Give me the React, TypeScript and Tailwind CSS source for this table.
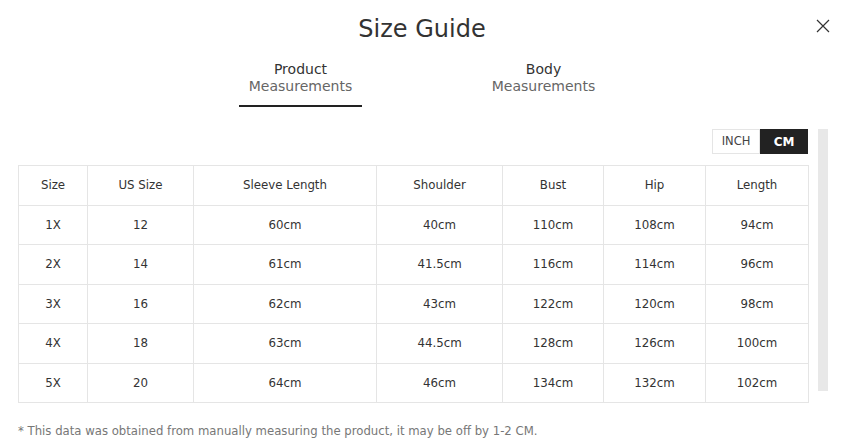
import React, { useState } from 'react';

const headers = ['Size', 'US Size', 'Sleeve Length', 'Shoulder', 'Bust', 'Hip', 'Length'];
const colWidths = ['w-[69px]', 'w-[106px]', 'w-[183px]', 'w-[126px]', 'w-[101px]', 'w-[102px]', 'w-[103px]'];

const rows = [
    ['1X', '12', '60cm', '40cm', '110cm', '108cm', '94cm'],
    ['2X', '14', '61cm', '41.5cm', '116cm', '114cm', '96cm'],
    ['3X', '16', '62cm', '43cm', '122cm', '120cm', '98cm'],
    ['4X', '18', '63cm', '44.5cm', '128cm', '126cm', '100cm'],
    ['5X', '20', '64cm', '46cm', '134cm', '132cm', '102cm'],
];

const App: React.FC = () => {
    const [tab, setTab] = useState<'product' | 'body'>('product');
    const [unit, setUnit] = useState<'inch' | 'cm'>('cm');

    return (
        <div className="relative w-[844px] h-[443px] bg-white text-[#333] overflow-hidden" style={{ fontFamily: '"DejaVu Sans", sans-serif' }}>
            {/* 關閉按鈕 */}
            <button className="absolute right-[14px] top-[19px] w-[14px] h-[14px] text-[#333]">
                <svg viewBox="0 0 14 14" className="w-full h-full" fill="none" stroke="currentColor" strokeWidth="1.2">
                    <path d="M1 1L13 13M13 1L1 13" />
                </svg>
            </button>

            <h2 className="pt-[13px] text-center text-[24px] leading-[32px] text-[#333]">Size Guide</h2>

            {/* 分頁 */}
            <div className="mt-[16px] flex justify-center gap-[120px]">
                <button
                    onClick={() => setTab('product')}
                    className={`w-[123px] pb-[10px] text-[14px] leading-[17px] border-b-2 ${tab === 'product' ? 'border-[#222]' : 'border-transparent'}`}
                >
                    <div className="text-[#333]">Product</div>
                    <div className="text-[#666]">Measurements</div>
                </button>
                <button
                    onClick={() => setTab('body')}
                    className={`w-[123px] pb-[10px] text-[14px] leading-[17px] border-b-2 ${tab === 'body' ? 'border-[#222]' : 'border-transparent'}`}
                >
                    <div className="text-[#333]">Body</div>
                    <div className="text-[#666]">Measurements</div>
                </button>
            </div>

            <div className="mt-[22px] pl-[18px] flex gap-[10px]">
                <div className="w-[790px]">
                    <div className="flex justify-end">
                        <button
                            onClick={() => setUnit('inch')}
                            className={`w-[48px] h-[25px] flex items-center justify-center text-[11.5px] leading-none border ${unit === 'inch' ? 'bg-[#222] border-[#222] text-white font-bold' : 'bg-white border-[#e5e5e5] text-[#444]'}`}
                        >
                            INCH
                        </button>
                        <button
                            onClick={() => setUnit('cm')}
                            className={`w-[48px] h-[25px] flex items-center justify-center text-[12px] leading-none border ${unit === 'cm' ? 'bg-[#222] border-[#222] text-white font-bold' : 'bg-white border-[#e5e5e5] text-[#444]'}`}
                        >
                            CM
                        </button>
                    </div>

                    <table className="mt-[11px] w-[790px] table-fixed border-collapse text-[11.8px] text-[#333]">
                        <colgroup>
                            {colWidths.map((w, i) => <col key={i} className={w} />)}
                        </colgroup>
                        <thead>
                            <tr className="h-[39.5px]">
                                {headers.map(h => (
                                    <th key={h} className="border border-[#e5e5e5] font-normal text-center pt-[2px]">{h}</th>
                                ))}
                            </tr>
                        </thead>
                        <tbody>
                            {rows.map(r => (
                                <tr key={r[0]} className="h-[39.5px]">
                                    {r.map((c, i) => (
                                        <td key={i} className="border border-[#e5e5e5] text-center pt-[2px]">{c}</td>
                                    ))}
                                </tr>
                            ))}
                        </tbody>
                    </table>
                </div>
                {/* 捲軸 */}
                <div className="w-[10px] h-[262px] bg-[#e8e8e8]"></div>
            </div>

            <p className="mt-[20px] pl-[18px] text-[11.7px] leading-[16px] text-[#777]">
                * This data was obtained from manually measuring the product, it may be off by 1-2 CM.
            </p>
        </div>
    );
};

export default App;
